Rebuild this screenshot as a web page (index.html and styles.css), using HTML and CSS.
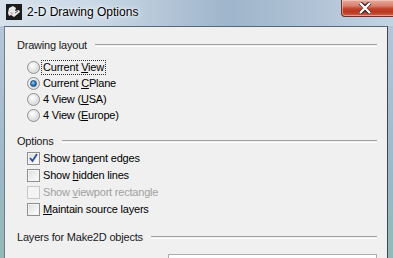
FILE: index.html
```html
<!DOCTYPE html>
<html lang="en">
<head>
    <meta charset="UTF-8">
    <title>2-D Drawing Options</title>
    <link rel="stylesheet" href="styles.css">
</head>
<body>
    <div class="window">
        <div class="titlebar">
            <svg class="app-icon" width="16" height="16" viewBox="0 0 16 16">
                <rect x="0" y="0" width="16" height="16" fill="#1b1b1b"/>
                <path d="M3 4 L7 2 L10 4 L9 7 L13 6 L14 8 L8 13 L5 11 L3 12 L2 9 Z" fill="#e8e8e8"/>
                <path d="M4 8 L7 9 L6 11 Z" fill="#d08a9a"/>
                <path d="M9 9 L12 7" stroke="#555" stroke-width="1"/>
            </svg>
            <span class="title">2-D Drawing Options</span>
            <div class="close-btn">
                <svg width="18" height="12" viewBox="0 0 18 12">
                    <path d="M4 1 L9 5 L14 1 M4 11 L9 7 L14 11 M9 5 L9 7" stroke="#3a2a2a" stroke-width="4" fill="none"/>
                    <path d="M4 1 L14 11 M14 1 L4 11" stroke="#ffffff" stroke-width="2.2" fill="none"/>
                </svg>
            </div>
        </div>
        <div class="frame">
            <div class="client">
                <div class="group">
                    <div class="group-head"><span>Drawing layout</span><div class="rule"></div></div>
                    <div class="item radio-row"><span class="radio"></span><span class="label focus">Current <u>V</u>iew</span></div>
                    <div class="item radio-row"><span class="radio on"></span><span class="label">Current <u>C</u>Plane</span></div>
                    <div class="item radio-row"><span class="radio"></span><span class="label">4 View (<u>U</u>SA)</span></div>
                    <div class="item radio-row"><span class="radio"></span><span class="label">4 View (<u>E</u>urope)</span></div>
                </div>
                <div class="group options">
                    <div class="group-head"><span>Options</span><div class="rule"></div></div>
                    <div class="item check-row">
                        <span class="check on">
                            <svg width="11" height="11" viewBox="0 0 11 11"><path d="M2 5 L4.5 8 L9 1" stroke="#2a4f9e" stroke-width="1.8" fill="none"/></svg>
                        </span>
                        <span class="label">Show <u>t</u>angent edges</span>
                    </div>
                    <div class="item check-row"><span class="check"></span><span class="label">Show <u>h</u>idden lines</span></div>
                    <div class="item check-row disabled"><span class="check"></span><span class="label">Show <u>v</u>iewport rectangle</span></div>
                    <div class="item check-row"><span class="check"></span><span class="label"><u>M</u>aintain source layers</span></div>
                </div>
                <div class="group layers">
                    <div class="group-head"><span>Layers for Make2D objects</span><div class="rule"></div></div>
                    <div class="field-row">
                        <div class="textbox">Make2D::visible::lines</div>
                    </div>
                </div>
            </div>
        </div>
    </div>
</body>
</html>
```

FILE: styles.css
```css
body {
    margin: 0;
    width: 393px;
    height: 258px;
    overflow: hidden;
    font-family: "Liberation Sans", Arial, sans-serif;
    font-size: 11px;
    letter-spacing: -0.2px;
}
.window {
    height: 258px;
    display: flex;
    flex-direction: column;
    background: linear-gradient(90deg, #c4d3e2 0%, #b6c8da 30%, #93abc3 58%, #a9bdd1 80%, #b7c9da 100%);
}
.titlebar {
    height: 26px;
    flex: none;
    display: flex;
    align-items: flex-start;
    background: linear-gradient(90deg, #d8e2ec 0%, #c9d7e5 25%, #9fb5cb 58%, #b0c3d6 80%, #c4d3e2 100%);
}
.app-icon {
    margin: 4px 0 0 6px;
}
.title {
    margin: 5px 0 0 5px;
    font-size: 12px;
    letter-spacing: 0;
    color: #000;
    text-shadow: 0 0 6px #fff, 0 0 3px #fff;
}
.close-btn {
    margin-left: auto;
    margin-right: -8px;
    width: 60px;
    height: 17px;
    border: 1px solid #6e3028;
    border-top: none;
    border-radius: 0 0 4px 4px;
    background: linear-gradient(180deg, #e7a99c 0%, #d9826f 35%, #c2432b 55%, #b8381f 75%, #d0644a 100%);
    box-shadow: inset 0 0 0 1px rgba(255, 220, 210, 0.5);
    display: flex;
    align-items: center;
    padding-left: 14px;
    box-sizing: border-box;
}
.frame {
    flex: 1;
    display: flex;
    padding: 0 5px 0 4px;
    background: linear-gradient(180deg, #b5c6d7 0%, #9cb8c6 60%, #8fbab3 100%);
}
.client {
    flex: 1;
    background: #f0f0f0;
    border-left: 1px solid #6f7d8a;
    border-right: 1px solid #3d4650;
    border-top: 1px solid #5a6876;
    padding: 10px 10px 0 12px;
}
.group-head {
    height: 16px;
    display: flex;
    align-items: center;
    color: #1a1a1a;
}
.rule {
    flex: 1;
    height: 1px;
    margin-left: 8px;
    margin-top: 1px;
    border-top: 1px solid #a0a0a0;
    border-bottom: 1px solid #ffffff;
}
.item {
    display: flex;
    align-items: center;
    padding-left: 10px;
}
.radio-row {
    height: 16px;
}
.group-head + .radio-row {
    margin-top: 6px;
}
.check-row {
    height: 17px;
}
.group-head + .check-row {
    margin-top: 1px;
}
.options {
    margin-top: 10px;
}
.layers {
    margin-top: 11px;
}
.radio {
    width: 11px;
    height: 11px;
    border: 1px solid #8e8f8f;
    border-radius: 50%;
    background: radial-gradient(circle at 40% 35%, #ffffff 0%, #e4e4e4 50%, #cfcfcf 100%);
    display: flex;
    align-items: center;
    justify-content: center;
    flex: none;
}
.radio.on::after {
    content: "";
    width: 5px;
    height: 5px;
    border-radius: 50%;
    background: radial-gradient(circle at 40% 35%, #8fd2f5 0%, #2a78b8 55%, #0f3e70 100%);
    border: 1px solid #1c4d7c;
}
.check {
    width: 11px;
    height: 11px;
    border: 1px solid #8f8f8f;
    background: linear-gradient(135deg, #dcdcdc 0%, #f2f2f2 60%, #ffffff 100%);
    box-shadow: inset 0 0 0 1px #f4f4f4;
    display: flex;
    align-items: center;
    justify-content: center;
    flex: none;
}
.disabled .check {
    border-color: #c8c8c8;
    background: #f4f4f4;
}
.disabled .label {
    color: #a0a0a0;
}
.label {
    margin-left: 1px;
    color: #000;
    line-height: 13px;
    padding: 0 1px;
    border: 1px solid transparent;
}
.label.focus {
    border: 1px dotted #333;
}
.field-row {
    display: flex;
    margin-top: 9px;
    padding-left: 151px;
}
.textbox {
    flex: 1;
    height: 20px;
    border: 1px solid #abadb3;
    background: #fff;
    padding: 3px 4px;
    box-sizing: border-box;
    color: #000;
    font-size: 11px;
}
```
